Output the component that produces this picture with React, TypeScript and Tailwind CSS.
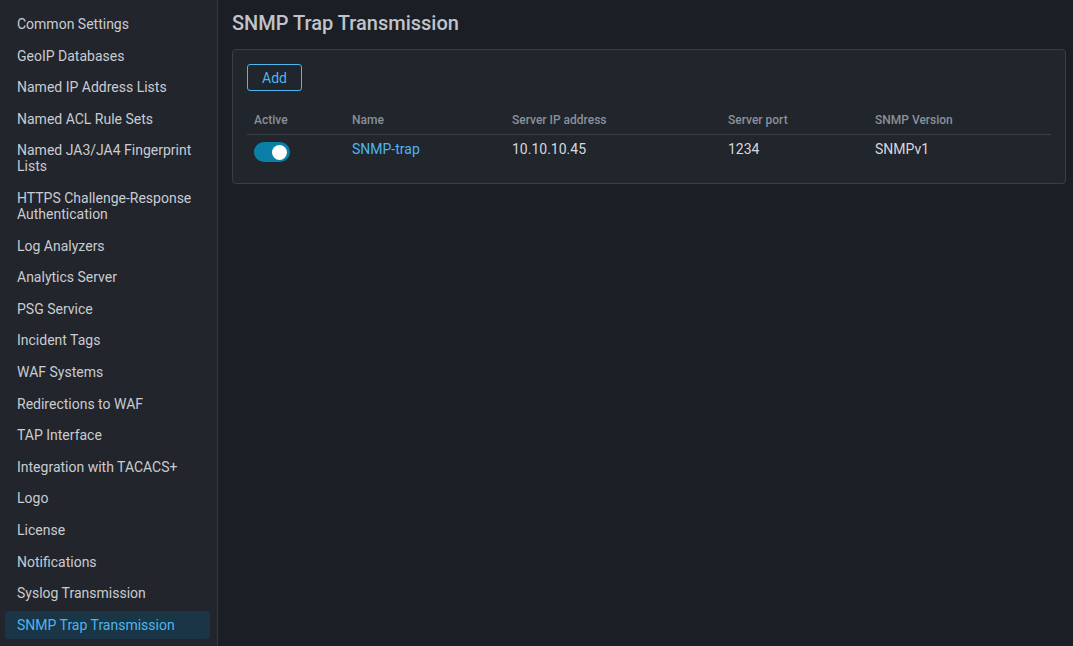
import { useState } from "react";

const menu = [
  "Common Settings",
  "GeoIP Databases",
  "Named IP Address Lists",
  "Named ACL Rule Sets",
  "Named JA3/JA4 Fingerprint Lists",
  "HTTPS Challenge-Response Authentication",
  "Log Analyzers",
  "Analytics Server",
  "PSG Service",
  "Incident Tags",
  "WAF Systems",
  "Redirections to WAF",
  "TAP Interface",
  "Integration with TACACS+",
  "Logo",
  "License",
  "Notifications",
  "Syslog Transmission",
  "SNMP Trap Transmission",
];

type Trap = { id: number; active: boolean; name: string; ip: string; port: number; version: string };

function Toggle({ on, onChange }: { on: boolean; onChange: () => void }) {
  return (
    <button
      onClick={onChange}
      className={`flex items-center w-[36px] h-[20px] rounded-full px-[3px] ${
        on ? "bg-[#0b7fa6] justify-end" : "bg-[#4a4f57] justify-start"
      }`}
    >
      <span className="block w-[15px] h-[15px] rounded-full bg-white" />
    </button>
  );
}

export default function App() {
  const [selected, setSelected] = useState("SNMP Trap Transmission");
  const [traps, setTraps] = useState<Trap[]>([
    { id: 1, active: true, name: "SNMP-trap", ip: "10.10.10.45", port: 1234, version: "SNMPv1" },
  ]);

  const toggle = (id: number) =>
    setTraps((t) => t.map((x) => (x.id === id ? { ...x, active: !x.active } : x)));

  return (
    <div className="flex h-[646px] bg-[#1b1e24] font-['Roboto',sans-serif] text-[14px] overflow-hidden">
      {/* settings menu */}
      <aside className="w-[218px] shrink-0 bg-[#22252c] border-r border-[#33373e] pt-[10px] pl-[5px] pr-[7px] flex flex-col gap-[3.6px]">
        {menu.map((item) => (
          <div
            key={item}
            onClick={() => setSelected(item)}
            className={`py-[6px] pl-[12px] pr-[8px] leading-[16px] rounded-[4px] cursor-pointer ${
              selected === item ? "bg-[#1a3545] text-[#4db6ee]" : "text-[#c9ccd1]"
            }`}
          >
            {item}
          </div>
        ))}
      </aside>

      <main className="flex-1 pl-[14px] pr-[7px]">
        <h1 className="text-[20px] font-medium text-[#c0c4ca] leading-[24px] pt-[11px] pb-[14px]">
          SNMP Trap Transmission
        </h1>

        <div className="bg-[#21252c] border border-[#393d44] rounded-[4px] pt-[14px] pb-[21px] px-[14px]">
          <button className="h-[27px] w-[55px] border border-[#4db6ee] rounded-[3px] text-[#4db6ee] text-[14px] leading-none">
            Add
          </button>

          <table className="w-full mt-[20px] text-left border-collapse">
            <thead>
              <tr className="border-b border-[#3a3e45] text-[12px] text-[#8a9099] font-medium">
                <th className="w-[105px] pl-[7px] pb-[5px] font-medium">Active</th>
                <th className="w-[160px] pb-[5px] font-medium">Name</th>
                <th className="w-[216px] pb-[5px] font-medium">Server IP address</th>
                <th className="w-[147px] pb-[5px] font-medium">Server port</th>
                <th className="pb-[5px] font-medium">SNMP Version</th>
              </tr>
            </thead>
            <tbody>
              {traps.map((t) => (
                <tr key={t.id} className="text-[#d6d9dd]">
                  <td className="pl-[7px] pt-[7px]">
                    <Toggle on={t.active} onChange={() => toggle(t.id)} />
                  </td>
                  <td className="pt-[6px] align-top leading-[16px]">
                    <a className="text-[#4db6ee] cursor-pointer">{t.name}</a>
                  </td>
                  <td className="pt-[6px] align-top leading-[16px]">{t.ip}</td>
                  <td className="pt-[6px] align-top leading-[16px]">{t.port}</td>
                  <td className="pt-[6px] align-top leading-[16px]">{t.version}</td>
                </tr>
              ))}
            </tbody>
          </table>
        </div>
      </main>
    </div>
  );
}
